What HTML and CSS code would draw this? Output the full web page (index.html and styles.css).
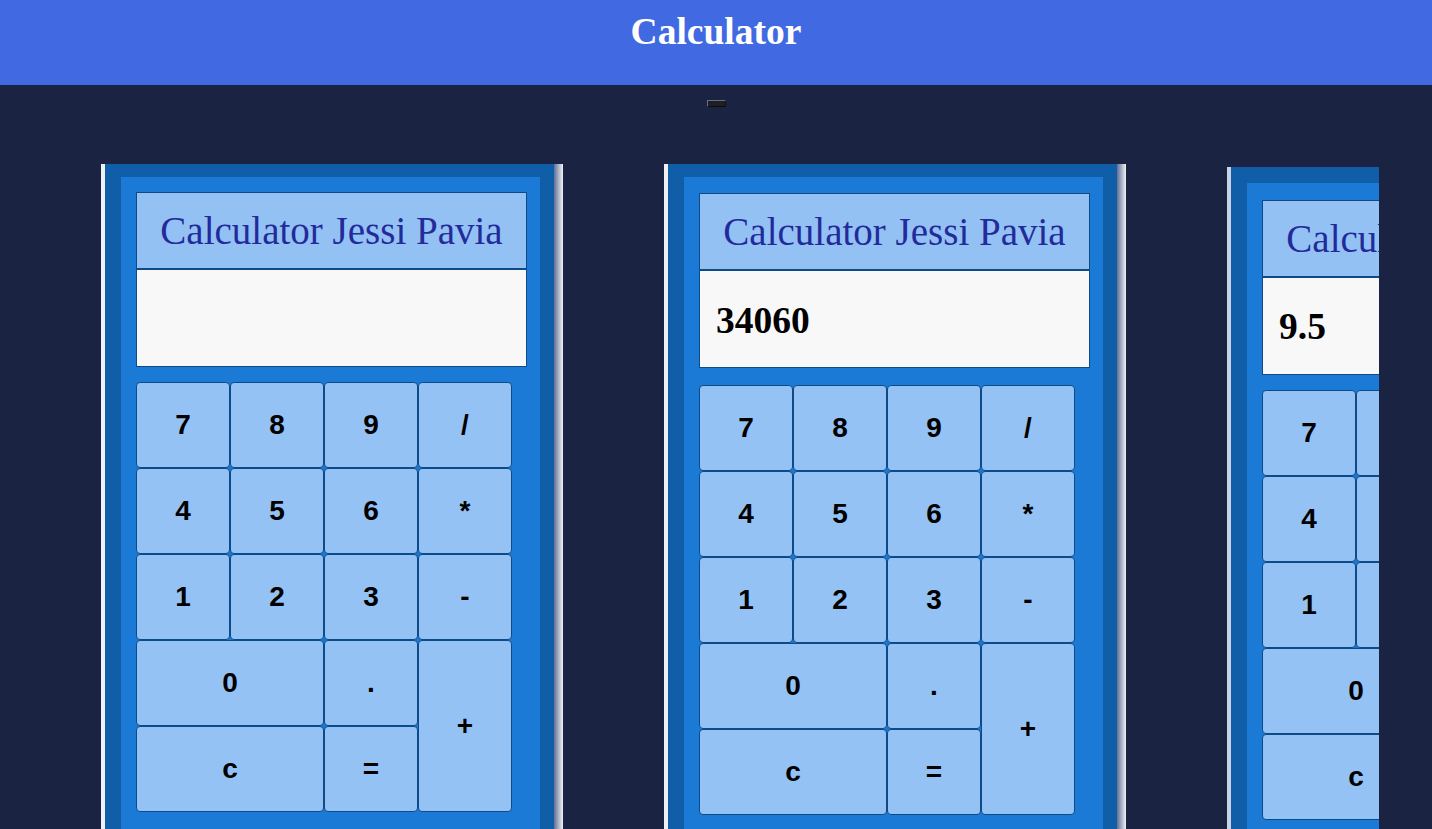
FILE: index.html
```html
<!DOCTYPE html>
<html lang="en">
<head>
<meta charset="utf-8">
<title>Calculator</title>
<link rel="stylesheet" href="styles.css">
</head>
<body>
<header class="topbar"><h1 class="topbar-title">Calculator</h1></header>
<div class="toggle-row"><button class="toggle" type="button"></button></div>
<main class="carousel">
  <section class="card">
    <div class="panel">
      <div class="title">Calculator Jessi Pavia</div>
      <div class="display"></div>
      <div class="keys">
        <button class="key">7</button><button class="key">8</button><button class="key">9</button><button class="key">/</button>
        <button class="key">4</button><button class="key">5</button><button class="key">6</button><button class="key">*</button>
        <button class="key">1</button><button class="key">2</button><button class="key">3</button><button class="key">-</button>
        <button class="key key-wide">0</button><button class="key">.</button><button class="key key-tall">+</button>
        <button class="key key-wide">c</button><button class="key">=</button>
      </div>
    </div>
  </section>
  <section class="card card-mid">
    <div class="panel">
      <div class="title">Calculator Jessi Pavia</div>
      <div class="display">34060</div>
      <div class="keys">
        <button class="key">7</button><button class="key">8</button><button class="key">9</button><button class="key">/</button>
        <button class="key">4</button><button class="key">5</button><button class="key">6</button><button class="key">*</button>
        <button class="key">1</button><button class="key">2</button><button class="key">3</button><button class="key">-</button>
        <button class="key key-wide">0</button><button class="key">.</button><button class="key key-tall">+</button>
        <button class="key key-wide">c</button><button class="key">=</button>
      </div>
    </div>
  </section>
  <section class="card card-far">
    <div class="panel">
      <div class="title">Calculator Jessi Pavia</div>
      <div class="display">9.5</div>
      <div class="keys">
        <button class="key">7</button><button class="key">8</button><button class="key">9</button><button class="key">/</button>
        <button class="key">4</button><button class="key">5</button><button class="key">6</button><button class="key">*</button>
        <button class="key">1</button><button class="key">2</button><button class="key">3</button><button class="key">-</button>
        <button class="key key-wide">0</button><button class="key">.</button><button class="key key-tall">+</button>
        <button class="key key-wide">c</button><button class="key">=</button>
      </div>
    </div>
  </section>
</main>
</body>
</html>
```
FILE: styles.css
```css
html, body {
  margin: 0;
  padding: 0;
}
body {
  background: #1a2442;
  font-family: "Liberation Serif", "Times New Roman", serif;
  overflow: hidden;
  height: 829px;
}
.topbar {
  background: #4169e1;
  height: 85px;
  box-sizing: border-box;
  padding-top: 10px;
  text-align: center;
}
.topbar-title {
  margin: 0;
  color: #ffffff;
  font-size: 37.5px;
  font-weight: bold;
  line-height: 44px;
}
.toggle-row {
  display: flex;
  justify-content: center;
  padding-top: 15px;
}
.toggle {
  width: 19px;
  height: 7px;
  padding: 0;
  margin: 0;
  background: #1e1f26;
  border: 1px solid #6b6e78;
  border-right-color: #111;
  border-bottom-color: #0c0c0c;
  box-sizing: border-box;
}
.carousel {
  width: 1326px;
  margin: 57px auto 0;
  box-sizing: border-box;
  padding-left: 48px;
  display: flex;
  gap: 101px;
  overflow: hidden;
  align-items: flex-start;
}
.card {
  flex: 0 0 auto;
  width: 462px;
  box-sizing: border-box;
  border-left: 4px solid #eef0f3;
  background: linear-gradient(to right, #5f6f96, #f2f2f4) right top / 9px 100% no-repeat, #105ea8;
  padding: 13px 23px 13px 16px;
}
.card-mid .panel {
  padding-top: 16px;
}
.card-mid .display {
  line-height: 100px;
}
.card-mid .keys {
  margin-top: 17px;
}
.card-far {
  margin-top: 3px;
  padding-top: 16px;
  border-left-color: #c9d3e6;
}
.card-far .panel {
  padding-top: 17px;
}
.panel {
  background: #1a7ad5;
  padding: 15px 13px 30px 15px;
}
.title {
  height: 78px;
  box-sizing: border-box;
  background: #93c1f4;
  border: 1px solid #0e4a86;
  border-bottom-width: 2px;
  color: #232b9b;
  font-size: 39px;
  text-align: center;
  line-height: 76px;
}
.display {
  height: 97px;
  box-sizing: border-box;
  background: #f8f8f8;
  border: 1px solid #0e4a86;
  border-top: none;
  color: #000;
  font-size: 37.5px;
  font-weight: bold;
  padding-left: 16px;
  line-height: 98px;
}
.keys {
  margin-top: 15px;
  display: grid;
  grid-template-columns: repeat(4, 94px);
  grid-auto-rows: 86px;
}
.key {
  margin: 0;
  padding: 0;
  background: #95c2f5;
  border: 1px solid #0d4a88;
  border-radius: 4px;
  color: #000;
  font-family: "Liberation Sans", Arial, sans-serif;
  font-weight: bold;
  font-size: 28px;
}
.key-wide {
  grid-column: span 2;
}
.key-tall {
  grid-row: span 2;
}
```
